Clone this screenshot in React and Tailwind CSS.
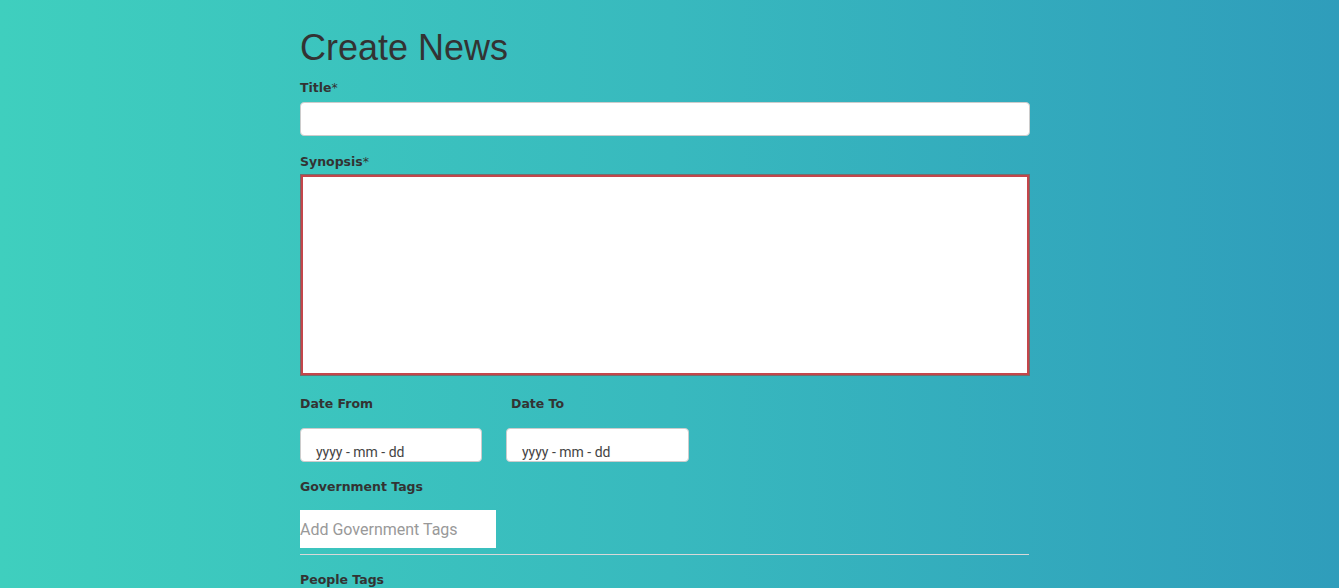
const labelCSS = "block text-[12.5px] font-bold text-[#333] font-['DejaVu_Sans',Verdana,sans-serif]"
const inputCSS = "bg-white border border-[#ccc] rounded-[4px]"

const App = () => {
  return (
    <div className="w-[1339px] h-[588px] overflow-hidden bg-gradient-to-r from-[#3fcfbe] via-[#38b9be] to-[#2f9dbb]">
      <div className="w-[730px] ml-[300px] pt-[28px]">
        <h1 className="text-[36px] leading-[40px] text-[#333] font-['Liberation_Sans',Arial,sans-serif]">Create News</h1>

        {/* TITLE */}
        <label className={`${labelCSS} mt-[12px] leading-[16px]`}>Title<span className="font-normal">*</span></label>
        <input type="text" className={`${inputCSS} w-full h-[34px] mt-[6px] block`} />

        {/* SYNOPSIS */}
        <label className={`${labelCSS} mt-[18px] leading-[16px]`}>Synopsis<span className="font-normal">*</span></label>
        <textarea className="block w-full h-[202px] mt-[4px] bg-white border border-[#6f6f6f] shadow-[inset_0_0_0_2px_#c4464b] outline-none resize-none" />

        {/* DATES */}
        <div className="flex mt-[20px]">
          <div className="w-[206px]">
            <label className={`${labelCSS} leading-[16px]`}>Date From</label>
            <div className={`${inputCSS} w-[182px] h-[34px] mt-[16px] flex items-end pl-[15px]`}>
              <span className="text-[14px] leading-[18px] text-[#444] font-['Roboto',sans-serif]">yyyy - mm - dd</span>
            </div>
          </div>
          <div>
            <label className={`${labelCSS} leading-[16px] ml-[5px]`}>Date To</label>
            <div className={`${inputCSS} w-[183px] h-[34px] mt-[16px] flex items-end pl-[15px]`}>
              <span className="text-[14px] leading-[18px] text-[#444] font-['Roboto',sans-serif]">yyyy - mm - dd</span>
            </div>
          </div>
        </div>

        {/* GOVERNMENT TAGS */}
        <label className={`${labelCSS} mt-[17px] leading-[16px]`}>Government Tags</label>
        <div className="w-[196px] h-[38px] mt-[15px] bg-white flex items-center">
          <span className="text-[16px] text-[#999] font-['Roboto',sans-serif] pt-[1px]">Add Government Tags</span>
        </div>
        <div className="h-px bg-[#d8d8d8] mt-[6px] w-[729px]" />

        {/* PEOPLE TAGS */}
        <label className={`${labelCSS} mt-[17px] leading-[16px]`}>People Tags</label>
      </div>
    </div>
  )
}

export default App
